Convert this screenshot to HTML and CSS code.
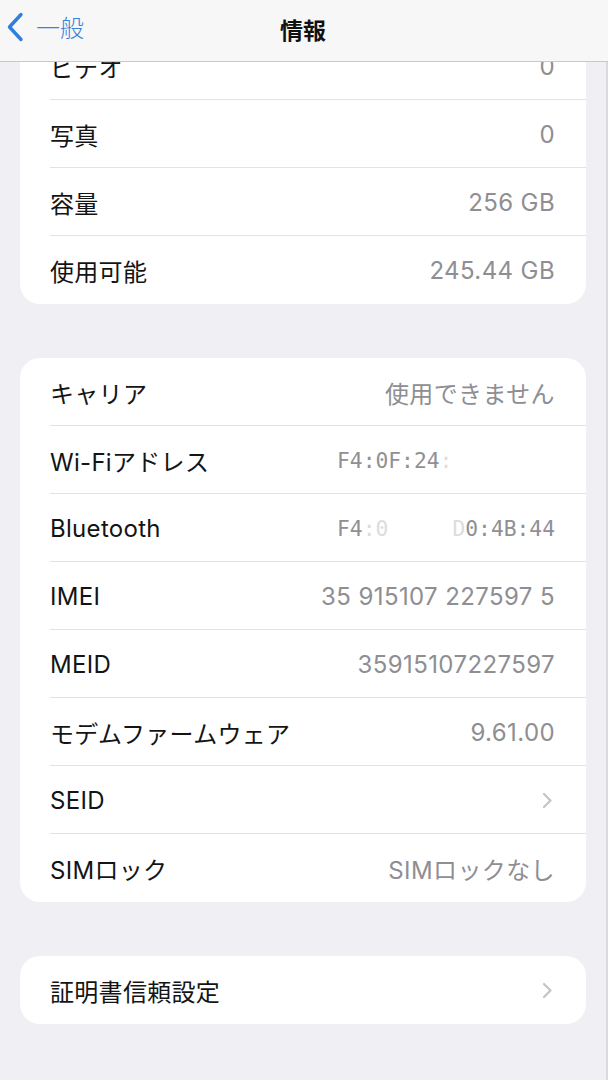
FILE: index.html
```html
<!DOCTYPE html>
<html lang="ja">
<head>
<meta charset="utf-8">
<title>情報</title>
<link rel="stylesheet" href="styles.css">
</head>
<body>
<header class="navbar">
  <div class="back">
    <svg class="back-chevron" width="18" height="30" viewBox="0 0 18 30">
      <path d="M15 2.5 L3.5 15 L15 27.5" fill="none" stroke="#2f7ee0" stroke-width="3.4" stroke-linecap="round" stroke-linejoin="round"/>
    </svg>
    <span class="back-label">一般</span>
  </div>
  <div class="title">情報</div>
</header>

<main class="content">
  <section class="card">
    <div class="row"><span class="label">ビデオ</span><span class="value">0</span></div>
    <div class="row"><span class="label">写真</span><span class="value">0</span></div>
    <div class="row"><span class="label">容量</span><span class="value">256 GB</span></div>
    <div class="row"><span class="label">使用可能</span><span class="value">245.44 GB</span></div>
  </section>

  <section class="card">
    <div class="row"><span class="label">キャリア</span><span class="value">使用できません</span></div>
    <div class="row"><span class="label">Wi-Fiアドレス</span><span class="value mono">F4:0F:24<span class="faint">:</span><span class="hidden">00:00:00</span></span></div>
    <div class="row"><span class="label">Bluetooth</span><span class="value mono">F4<span class="faint">:0</span><span class="hidden">F:24:</span><span class="faint">D</span>0:4B:44</span></div>
    <div class="row"><span class="label">IMEI</span><span class="value">35 915107 227597 5</span></div>
    <div class="row"><span class="label">MEID</span><span class="value">35915107227597</span></div>
    <div class="row"><span class="label">モデムファームウェア</span><span class="value">9.61.00</span></div>
    <div class="row"><span class="label">SEID</span>
      <svg class="chevron" width="11" height="17" viewBox="0 0 11 17"><path d="M2 2 L8.5 8.5 L2 15" fill="none" stroke="#c4c4c8" stroke-width="2.2" stroke-linecap="round" stroke-linejoin="round"/></svg>
    </div>
    <div class="row"><span class="label">SIMロック</span><span class="value">SIMロックなし</span></div>
  </section>

  <section class="card">
    <div class="row"><span class="label">証明書信頼設定</span>
      <svg class="chevron" width="11" height="17" viewBox="0 0 11 17"><path d="M2 2 L8.5 8.5 L2 15" fill="none" stroke="#c4c4c8" stroke-width="2.2" stroke-linecap="round" stroke-linejoin="round"/></svg>
    </div>
  </section>
</main>
</body>
</html>
```

FILE: styles.css
```css
html, body {
  margin: 0;
  padding: 0;
}

body {
  background: #efeff4;
  font-family: "Inter", "Noto Sans CJK JP", sans-serif;
  width: 608px;
  height: 1080px;
  overflow: hidden;
  box-shadow: inset -2px 0 0 #d9d9de;
}

.navbar {
  position: fixed;
  top: 0;
  left: 0;
  width: 608px;
  height: 62px;
  box-sizing: border-box;
  background: #f7f7f7;
  border-bottom: 1px solid #c9c9cc;
  z-index: 10;
  display: flex;
  align-items: center;
  justify-content: center;
}

.back {
  position: absolute;
  left: 6px;
  top: 12px;
  display: flex;
  align-items: center;
  gap: 12px;
}

.back-chevron {
  display: block;
}

.back-label {
  color: #3a82d8;
  font-size: 24px;
  line-height: 30px;
  font-family: "Noto Sans CJK JP", sans-serif;
  font-weight: 300;
}

.title {
  font-size: 23px;
  font-weight: 700;
  color: #111;
  font-family: "Noto Sans CJK JP", sans-serif;
  margin-top: -4px;
  margin-left: -2px;
}

.content {
  padding-top: 32px;
  display: flex;
  flex-direction: column;
  gap: 54px;
}

.card {
  background: #fff;
  margin: 0 22px 0 20px;
  border-radius: 20px;
  padding-left: 30px;
}

.row {
  height: 68px;
  box-sizing: border-box;
  display: flex;
  align-items: center;
  justify-content: space-between;
  padding-top: 1px;
  padding-right: 31px;
  border-bottom: 1px solid #e3e3e6;
}

.row:last-child {
  border-bottom: none;
}

.label {
  font-size: 24px;
  color: #141414;
  font-weight: 400;
  letter-spacing: 0.3px;
}

.value {
  font-size: 24px;
  color: #8e8e93;
  font-weight: 400;
  letter-spacing: 0.4px;
}

.value.mono {
  font-family: "DejaVu Sans Mono", monospace;
  font-size: 21.3px;
  letter-spacing: 0;
  color: #909094;
}

.faint {
  color: #dcdcde;
}

.hidden {
  color: #fff;
}

.chevron {
  display: block;
  margin-right: 2px;
}
```
